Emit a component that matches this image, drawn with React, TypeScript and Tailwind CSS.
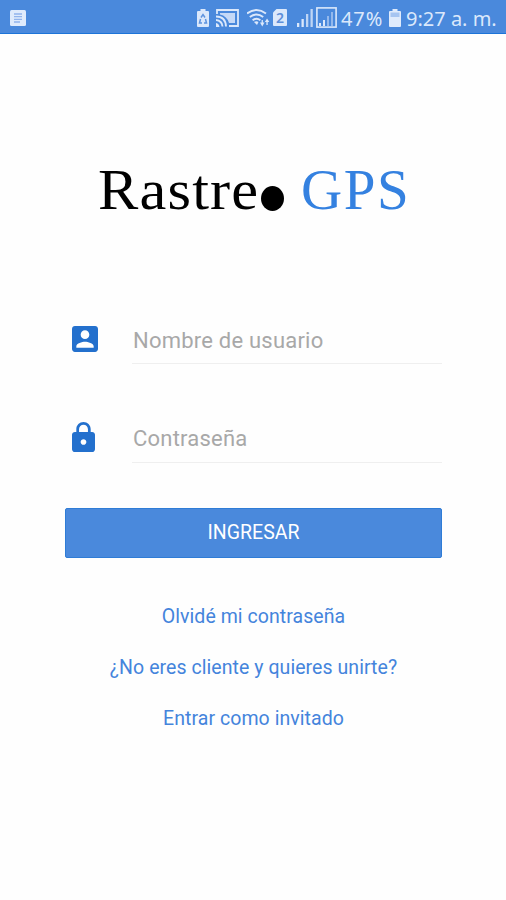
import { useState } from "react";

const links = [
  "Olvidé mi contraseña",
  "¿No eres cliente y quieres unirte?",
  "Entrar como invitado",
];

function StatusBar() {
  return (
    <header className="flex h-[34px] items-start border-b border-[#1c74d8] bg-[#4a89dc] pl-[10px] font-['Noto_Sans','Open_Sans',sans-serif] text-[#dbe8fb]">
      {/* Notification */}
      <svg className="mt-[10px] h-4 w-4 shrink-0" viewBox="0 0 16 16">
        <rect width="16" height="16" rx="1.5" fill="#dfebfc" />
        <path d="M4 4h8M4 6.7h8M4 9.4h8M4 12h6" stroke="#91b4ec" strokeWidth="1.3" />
      </svg>

      {/* Battery saver */}
      <svg className="mt-[9px] ml-[171px] h-[18px] w-3 shrink-0" viewBox="0 0 12 18">
        <path d="M3.5 0h5v2H11q1 0 1 1v14q0 1-1 1H1q-1 0-1-1V3q0-1 1-1h2.500z" fill="#dbe8fb" />
        <path
          d="M4 8.500l2-3 2 3M3.500 10l-1 4h2.500M8.500 10l1 4H7"
          fill="none"
          stroke="#5f94df"
          strokeWidth="1.500"
        />
      </svg>

      {/* Cast */}
      <svg className="mt-[9px] ml-[7px] h-[18px] w-[23px] shrink-0" viewBox="0 0 23 18">
        <path d="M1 5V1h21v16h-9" fill="none" stroke="currentColor" strokeWidth="1.800" />
        <path d="M4 4h15v10h-6Q11 7 4 5.500z" fill="currentColor" opacity="0.85" />
        <path
          d="M0 7.500q9.500 0 10 10M0 11q6 .5 6.500 6.500"
          fill="none"
          stroke="currentColor"
          strokeWidth="1.900"
        />
        <path d="M0 14q3 .5 3.500 4H0z" fill="currentColor" />
      </svg>

      {/* Wifi */}
      <svg className="mt-[9px] ml-2 h-[18px] w-[23px] shrink-0" viewBox="0 0 23 18">
        <g fill="none" stroke="currentColor" strokeWidth="1.900">
          <path d="M0 4.500q9.500-7 19 0" />
          <path d="M2.800 8q6.700-5 13.400 0" />
          <path d="M5.600 11.300q3.900-3 7.800 0" />
        </g>
        <path d="M7 13q2.500-1.700 4.500 0L10 16z" fill="currentColor" />
        <path d="M13 13.500h4.500l-2.250 4zM17.800 13h4.500l-2.250-3.500z" fill="currentColor" />
        <path d="M15.250 11v3M20.050 13v3" stroke="currentColor" strokeWidth="1.300" />
      </svg>

      {/* Sim */}
      <div className="mt-[9px] ml-[3px] flex h-[17px] w-[14px] shrink-0 items-center justify-center rounded-[1px] bg-[#dbe8fb] text-[14px] leading-none font-semibold text-[#5e8fd9] [clip-path:polygon(25%_0,100%_0,100%_100%,0_100%,0_20%)]">
        2
      </div>

      {/* Signal */}
      <svg className="mt-[9px] ml-[10px] h-[18px] w-4 shrink-0" viewBox="0 0 16 18">
        <path d="M0 14h2.300v4H0zM4.500 10h2.300v8H4.500z" fill="currentColor" />
        <path d="M9 5h2.300v13H9zM13.500 0h2.300v18h-2.300z" fill="currentColor" opacity="0.8" />
      </svg>
      <svg className="mt-[7px] ml-[3px] h-[21px] w-[21px] shrink-0" viewBox="0 0 21 21">
        <rect x="0.900" y="0.900" width="19.200" height="19.200" fill="none" stroke="currentColor" strokeWidth="1.600" />
        <path d="M3 16h2v3H3zM7 13h2v6H7z" fill="currentColor" />
        <path d="M11 9h2v10h-2zM15 5h2v14h-2z" fill="currentColor" opacity="0.5" />
      </svg>

      <span className="mt-[5px] ml-1 w-[44px] shrink-0 text-[20px] leading-[28px] tracking-[0.900px] whitespace-nowrap">
        47%
      </span>

      {/* Battery */}
      <svg className="mt-[9px] ml-1 h-[18px] w-3 shrink-0" viewBox="0 0 12 18">
        <path d="M3.500 0h5v2H11q1 0 1 1v14q0 1-1 1H1q-1 0-1-1V3q0-1 1-1h2.500z" fill="#dfebfc" />
        <path d="M1.500 3.500h9V8h-9z" fill="#a6c5f1" />
      </svg>

      <span className="mt-[5px] ml-[5px] shrink-0 text-[20px] leading-[28px] whitespace-nowrap">
        9:27 a. m.
      </span>
    </header>
  );
}

export default function App() {
  const [username, setUsername] = useState("");
  const [password, setPassword] = useState("");

  return (
    <div className="h-[900px] w-full overflow-hidden bg-[#fefefe] font-['Roboto',sans-serif]">
      <StatusBar />

      <h1 className="mt-[123px] flex h-[66px] items-center pl-[98px] font-['Liberation_Serif',serif] text-[57px] leading-[66px] whitespace-nowrap">
        <span className="w-[163px] origin-left scale-x-[1.06] tracking-[1.100px] text-black">
          Rastre
        </span>
        <span className="mt-[17px] h-[25px] w-[23px] rounded-[50%] bg-black" />
        <span className="ml-[17px] tracking-[1.600px] text-[#3481e0]">GPS</span>
      </h1>

      <form className="mt-[93px] pr-[64px] pl-[65px]" onSubmit={(e) => e.preventDefault()}>
        <div className="flex h-[48px]">
          {/* Account box */}
          <svg className="mt-[10px] ml-[7px] h-[26px] w-[26px]" viewBox="3 3 18 18">
            <path
              fill="#2370cd"
              d="M3 5v14c0 1.100.89 2 2 2h14c1.100 0 2-.9 2-2V5c0-1.100-.9-2-2-2H5c-1.110 0-2 .9-2 2zm12 4c0 1.660-1.340 3-3 3s-3-1.340-3-3 1.340-3 3-3 3 1.340 3 3zm-9 8c0-2 4-3.100 6-3.100s6 1.100 6 3.100v1H6v-1z"
            />
          </svg>
          <input
            type="text"
            value={username}
            onChange={(e) => setUsername(e.target.value)}
            placeholder="Nombre de usuario"
            className="ml-[34px] h-[48px] w-[310px] border-b border-[#efefef] pt-[2px] pl-px text-[22px] tracking-[0.220px] outline-none placeholder:text-[#a8a8a8]"
          />
        </div>

        <div className="mt-[50px] flex h-[49px]">
          {/* Lock */}
          <svg className="mt-2 ml-[7px] h-[30px] w-[23px]" viewBox="4 1 16 21" preserveAspectRatio="none">
            <path
              fill="#2370cd"
              d="M18 8h-1V6c0-2.760-2.240-5-5-5S7 3.240 7 6v2H6c-1.100 0-2 .9-2 2v10c0 1.100.9 2 2 2h12c1.100 0 2-.9 2-2V10c0-1.100-.9-2-2-2zm-6 9c-1.100 0-2-.9-2-2s.9-2 2-2 2 .9 2 2-.9 2-2 2zm3.100-9H8.900V6c0-1.710 1.390-3.100 3.100-3.100 1.710 0 3.100 1.390 3.100 3.100v2z"
            />
          </svg>
          <input
            type="password"
            value={password}
            onChange={(e) => setPassword(e.target.value)}
            placeholder="Contraseña"
            className="ml-[37px] h-[49px] w-[310px] border-b border-[#efefef] pt-px pl-px text-[22px] tracking-[0.220px] outline-none placeholder:text-[#a8a8a8]"
          />
        </div>

        <button
          type="submit"
          className="mt-[45px] h-[50px] w-full rounded-[2px] border border-[#2f7cd6] bg-[#4a89dc] text-[19.500px] text-white"
        >
          INGRESAR
        </button>
      </form>

      <nav className="mt-[45px] flex flex-col items-center gap-[23px] pl-px">
        {links.map((link) => (
          <a key={link} href="#" className="text-[19.500px] leading-[28px] tracking-[0.060px] text-[#4484dc]">
            {link}
          </a>
        ))}
      </nav>
    </div>
  );
}
